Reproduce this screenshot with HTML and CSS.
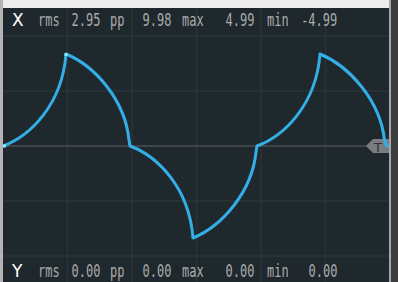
FILE: index.html
```html
<!DOCTYPE html>
<html>
<head>
<meta charset="utf-8">
<link rel="stylesheet" href="styles.css">
</head>
<body>
<div class="frame">
  <div class="edge-left"></div>
  <div class="main">
    <div class="topstrip"></div>
    <div class="plot">
      <svg class="scope" width="386" height="274" viewBox="3 8 386 274">
        <rect x="3" y="8" width="386" height="274" fill="#1f282c"/>
        <g stroke="#2a3438" stroke-width="1.5">
          <line x1="67.5" y1="8" x2="67.5" y2="282"/>
          <line x1="132" y1="8" x2="132" y2="282"/>
          <line x1="196.5" y1="8" x2="196.5" y2="282"/>
          <line x1="261" y1="8" x2="261" y2="282"/>
          <line x1="325.5" y1="8" x2="325.5" y2="282"/>
          <line x1="3" y1="36" x2="389" y2="36"/>
          <line x1="3" y1="91" x2="389" y2="91"/>
          <line x1="3" y1="201" x2="389" y2="201"/>
          <line x1="3" y1="256" x2="389" y2="256"/>
        </g>
        <line x1="3" y1="146" x2="367" y2="146" stroke="#5b6163" stroke-width="1.2"/>
        <polygon points="366,146 373,139 389,139 389,153 373,153" fill="#7a7c7d"/>
        <text x="378" y="151.5" class="trig">T</text>
        <path d="M3,146 C30,136 62,105 66,54 C95,66 125,100 129,140 L130,146 C157,156 189,187 193,238 C222,226 252,192 256,152 L257,146 C284,136 316,105 320,54 C349,66 380,100 384.5,140 L386.5,146 L390,146" fill="none" stroke="#33aee6" stroke-width="3" stroke-linejoin="round"/>
        <rect x="3" y="144.5" width="3" height="3" fill="#8cecff"/>
        <rect x="64.5" y="53" width="3" height="3" fill="#8cecff"/>
      </svg>
      <div class="rows">
        <div class="row">
          <span class="name">X</span>
          <div class="pair p1"><span class="lbl">rms</span><span class="val"><span>2.95</span></span></div>
          <div class="pair p2"><span class="lbl">pp</span><span class="val"><span>9.98</span></span></div>
          <div class="pair p3"><span class="lbl">max</span><span class="val"><span>4.99</span></span></div>
          <div class="pair p4"><span class="lbl">min</span><span class="val"><span>-4.99</span></span></div>
        </div>
        <div class="row">
          <span class="name">Y</span>
          <div class="pair p1"><span class="lbl">rms</span><span class="val"><span>0.00</span></span></div>
          <div class="pair p2"><span class="lbl">pp</span><span class="val"><span>0.00</span></span></div>
          <div class="pair p3"><span class="lbl">max</span><span class="val"><span>0.00</span></span></div>
          <div class="pair p4"><span class="lbl">min</span><span class="val"><span>0.00</span></span></div>
        </div>
      </div>
    </div>
  </div>
  <div class="edge-right"></div>
  <div class="edge-far"></div>
</div>
</body>
</html>
```
FILE: styles.css
```css
html, body {
  margin: 0;
  padding: 0;
  background: #1f282c;
}
.frame {
  display: flex;
  width: 398px;
  height: 282px;
  overflow: hidden;
}
.edge-left {
  width: 3px;
  flex-shrink: 0;
  background: #b4b4b4;
}
.main {
  width: 386px;
  flex-shrink: 0;
  display: flex;
  flex-direction: column;
}
.topstrip {
  height: 8px;
  background: #ececec;
}
.plot {
  flex: 1;
  display: grid;
}
.scope, .rows {
  grid-area: 1 / 1;
}
.scope {
  display: block;
}
.trig {
  font-family: "DejaVu Sans", sans-serif;
  font-size: 13px;
  fill: #2b2f31;
  text-anchor: middle;
}
.rows {
  display: flex;
  flex-direction: column;
  justify-content: space-between;
  padding: 2px 0 1px 9px;
}
.row {
  display: flex;
  align-items: baseline;
  height: 20px;
  font-family: "DejaVu Sans Mono", monospace;
  font-size: 18px;
  line-height: 20px;
  color: #a9acad;
  white-space: nowrap;
}
.name {
  width: 26px;
  flex-shrink: 0;
  font-family: "DejaVu Sans", sans-serif;
  font-size: 17px;
  color: #ffffff;
}
.pair {
  display: flex;
  justify-content: space-between;
  flex-shrink: 0;
}
.p1 { width: 62px; }
.p2 { width: 61px; margin-left: 10px; }
.p3 { width: 72px; margin-left: 11px; }
.p4 { width: 70px; margin-left: 13px; }
.lbl {
  display: inline-block;
  width: 20px;
  flex-shrink: 0;
  transform: scaleX(0.665);
  transform-origin: left center;
}
.val {
  display: flex;
  justify-content: flex-end;
  width: 30px;
  flex-shrink: 0;
}
.val span {
  display: inline-block;
  transform: scaleX(0.665);
  transform-origin: right center;
}
.edge-right {
  width: 2px;
  flex-shrink: 0;
  background: #a6a6a6;
}
.edge-far {
  flex: 1;
  background: #3c3c3c;
}
```
